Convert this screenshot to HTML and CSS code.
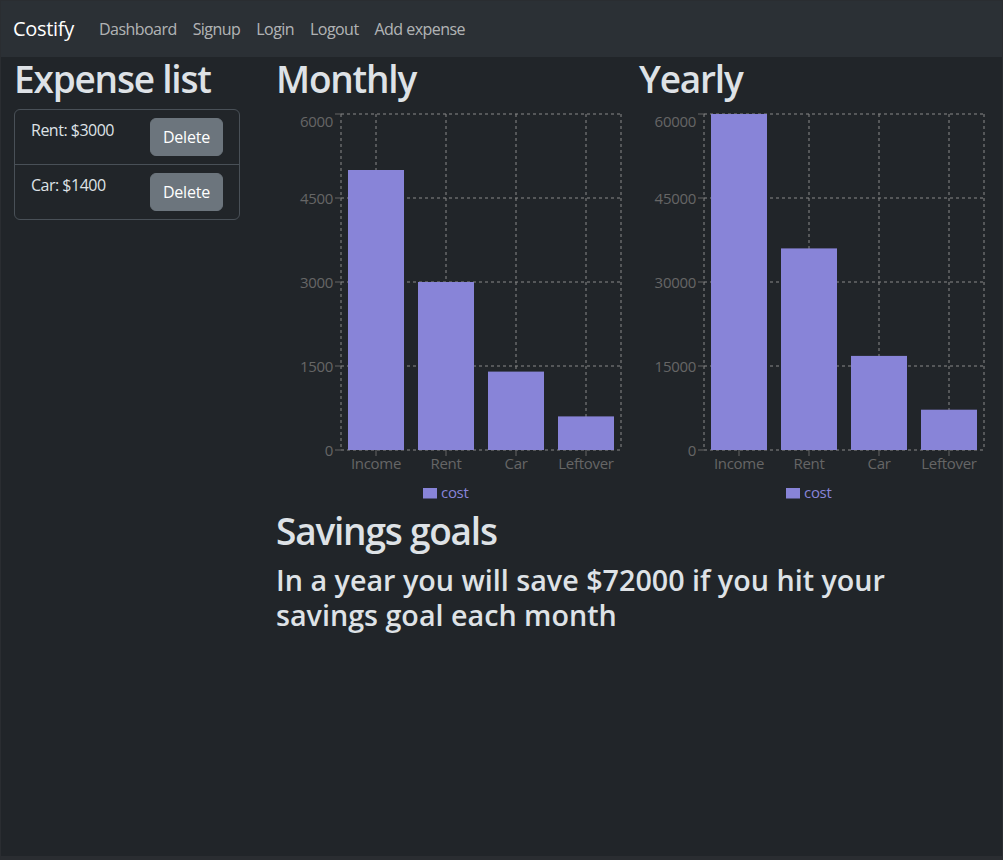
FILE: index.html
```
<!DOCTYPE html>
<html lang="en">
<head>
<meta charset="utf-8">
<title>Costify</title>
<link rel="stylesheet" href="styles.css">
</head>
<body>
<div class="app">
  <nav class="navbar">
    <a class="brand" href="#">Costify</a>
    <ul class="nav">
      <li><a class="nav-link" href="#">Dashboard</a></li>
      <li><a class="nav-link" href="#">Signup</a></li>
      <li><a class="nav-link" href="#">Login</a></li>
      <li><a class="nav-link" href="#">Logout</a></li>
      <li><a class="nav-link" href="#">Add expense</a></li>
    </ul>
  </nav>
  <main class="layout">
    <section class="expenses">
      <h1 class="title">Expense list</h1>
      <ul class="list">
        <li class="list-item"><span class="item-text">Rent: $3000</span><button class="btn">Delete</button></li>
        <li class="list-item"><span class="item-text">Car: $1400</span><button class="btn">Delete</button></li>
      </ul>
    </section>
    <section class="charts">
      <div class="chart-col">
        <h1 class="title">Monthly</h1>
        <svg class="chart" width="350" height="400" viewBox="0 0 350 400">
          <g class="grid">
            <line x1="65" y1="5" x2="345" y2="5"/>
            <line x1="65" y1="89" x2="345" y2="89"/>
            <line x1="65" y1="173" x2="345" y2="173"/>
            <line x1="65" y1="257" x2="345" y2="257"/>
            <line x1="65" y1="341" x2="345" y2="341"/>
            <line x1="65" y1="5" x2="65" y2="341"/>
            <line x1="100" y1="5" x2="100" y2="341"/>
            <line x1="170" y1="5" x2="170" y2="341"/>
            <line x1="240" y1="5" x2="240" y2="341"/>
            <line x1="310" y1="5" x2="310" y2="341"/>
            <line x1="345" y1="5" x2="345" y2="341"/>
          </g>
          <g class="ticks">
            <line x1="59" y1="5" x2="65" y2="5"/>
            <line x1="59" y1="89" x2="65" y2="89"/>
            <line x1="59" y1="173" x2="65" y2="173"/>
            <line x1="59" y1="257" x2="65" y2="257"/>
            <line x1="59" y1="341" x2="65" y2="341"/>
            <line x1="100" y1="341" x2="100" y2="347"/>
            <line x1="170" y1="341" x2="170" y2="347"/>
            <line x1="240" y1="341" x2="240" y2="347"/>
            <line x1="310" y1="341" x2="310" y2="347"/>
          </g>
          <g class="ylabels">
            <text x="57" y="17.5">6000</text>
            <text x="57" y="94.5">4500</text>
            <text x="57" y="178.5">3000</text>
            <text x="57" y="262.5">1500</text>
            <text x="57" y="346.5">0</text>
          </g>
          <g class="bars">
            <rect x="72" y="61" width="56" height="280"/>
            <rect x="142" y="173" width="56" height="168"/>
            <rect x="212" y="262.6" width="56" height="78.4"/>
            <rect x="282" y="307.4" width="56" height="33.6"/>
          </g>
          <g class="xlabels">
            <text x="100" y="359.5">Income</text>
            <text x="170" y="359.5">Rent</text>
            <text x="240" y="359.5">Car</text>
            <text x="310" y="359.5">Leftover</text>
          </g>
          <g class="legend">
            <rect x="147" y="379" width="14" height="10.5"/>
            <text x="165" y="389">cost</text>
          </g>
        </svg>
      </div>
      <div class="chart-col">
        <h1 class="title">Yearly</h1>
        <svg class="chart" width="350" height="400" viewBox="0 0 350 400">
          <g class="grid">
            <line x1="65" y1="5" x2="345" y2="5"/>
            <line x1="65" y1="89" x2="345" y2="89"/>
            <line x1="65" y1="173" x2="345" y2="173"/>
            <line x1="65" y1="257" x2="345" y2="257"/>
            <line x1="65" y1="341" x2="345" y2="341"/>
            <line x1="65" y1="5" x2="65" y2="341"/>
            <line x1="100" y1="5" x2="100" y2="341"/>
            <line x1="170" y1="5" x2="170" y2="341"/>
            <line x1="240" y1="5" x2="240" y2="341"/>
            <line x1="310" y1="5" x2="310" y2="341"/>
            <line x1="345" y1="5" x2="345" y2="341"/>
          </g>
          <g class="ticks">
            <line x1="59" y1="5" x2="65" y2="5"/>
            <line x1="59" y1="89" x2="65" y2="89"/>
            <line x1="59" y1="173" x2="65" y2="173"/>
            <line x1="59" y1="257" x2="65" y2="257"/>
            <line x1="59" y1="341" x2="65" y2="341"/>
            <line x1="100" y1="341" x2="100" y2="347"/>
            <line x1="170" y1="341" x2="170" y2="347"/>
            <line x1="240" y1="341" x2="240" y2="347"/>
            <line x1="310" y1="341" x2="310" y2="347"/>
          </g>
          <g class="ylabels">
            <text x="57" y="17.5">60000</text>
            <text x="57" y="94.5">45000</text>
            <text x="57" y="178.5">30000</text>
            <text x="57" y="262.5">15000</text>
            <text x="57" y="346.5">0</text>
          </g>
          <g class="bars">
            <rect x="72" y="5" width="56" height="336"/>
            <rect x="142" y="139.4" width="56" height="201.6"/>
            <rect x="212" y="246.9" width="56" height="94.1"/>
            <rect x="282" y="300.7" width="56" height="40.3"/>
          </g>
          <g class="xlabels">
            <text x="100" y="359.5">Income</text>
            <text x="170" y="359.5">Rent</text>
            <text x="240" y="359.5">Car</text>
            <text x="310" y="359.5">Leftover</text>
          </g>
          <g class="legend">
            <rect x="147" y="379" width="14" height="10.5"/>
            <text x="165" y="389">cost</text>
          </g>
        </svg>
      </div>
      <div class="savings">
        <h1 class="title">Savings goals</h1>
        <h2 class="subtitle">In a year you will save $72000 if you hit your savings goal each month</h2>
      </div>
    </section>
  </main>
</div>
</body>
</html>
```

FILE: styles.css
```
* { box-sizing: border-box; }

html {
  background: #2a2d31;
}

body {
  margin: 0;
  font-family: "Open Sans", "Noto Sans", sans-serif;
  color: #dee2e6;
}

.app {
  margin: 1px 1px 4px 1px;
  height: 855px;
  background: #212529;
}

.navbar {
  display: flex;
  align-items: center;
  height: 56px;
  padding: 8px 12px;
  background: #2b3035;
}

.brand {
  font-size: 20px;
  line-height: 30px;
  color: #fff;
  text-decoration: none;
  margin-right: 17px;
  letter-spacing: -0.3px;
}

.nav {
  display: flex;
  list-style: none;
  margin: 0;
  padding: 0;
}

.nav-link {
  display: block;
  padding: 8px 8px;
  font-size: 16px;
  line-height: 24px;
  color: rgba(255, 255, 255, 0.65);
  text-decoration: none;
  letter-spacing: -0.55px;
}

.layout {
  display: grid;
  grid-template-columns: 226px 1fr;
  column-gap: 36px;
  padding-left: 13px;
}

.title {
  margin: 0 0 8px;
  font-size: 37px;
  line-height: 1.2;
  font-weight: 600;
  letter-spacing: -1.2px;
  color: #dee2e6;
}

.list {
  list-style: none;
  margin: 0;
  padding: 0;
  border: 1px solid #495057;
  border-radius: 6px;
}

.list-item {
  display: flex;
  justify-content: space-between;
  align-items: flex-start;
  padding: 8px 16px;
  font-size: 16px;
  line-height: 24px;
}

.list-item + .list-item {
  border-top: 1px solid #495057;
}

.item-text {
  letter-spacing: -0.5px;
}

.btn {
  font-family: inherit;
  font-size: 16px;
  line-height: 24px;
  padding: 6px 12px;
  border: 1px solid #6c757d;
  border-radius: 6px;
  background: #6c757d;
  color: #fff;
  letter-spacing: -0.2px;
}

.charts {
  display: grid;
  grid-template-columns: 363px auto;
}

.chart {
  display: block;
}

.grid line {
  stroke: #8a8a8a;
  stroke-width: 1;
  stroke-dasharray: 3 3;
}

.ticks line {
  stroke: #666;
  stroke-width: 1;
}

.ylabels text {
  fill: #666;
  font-size: 15px;
  text-anchor: end;
  letter-spacing: -0.3px;
}

.xlabels text {
  fill: #666;
  font-size: 15px;
  text-anchor: middle;
  letter-spacing: -0.3px;
}

.bars rect {
  fill: #8884d8;
}

.legend rect {
  fill: #8884d8;
}

.legend text {
  fill: #8884d8;
  font-size: 15px;
  letter-spacing: -0.3px;
}

.savings {
  grid-column: 1 / -1;
  padding-right: 12px;
}

.subtitle {
  margin: 0;
  font-size: 28.7px;
  line-height: 35px;
  font-weight: 600;
  letter-spacing: 0;
  color: #dee2e6;
}
```
